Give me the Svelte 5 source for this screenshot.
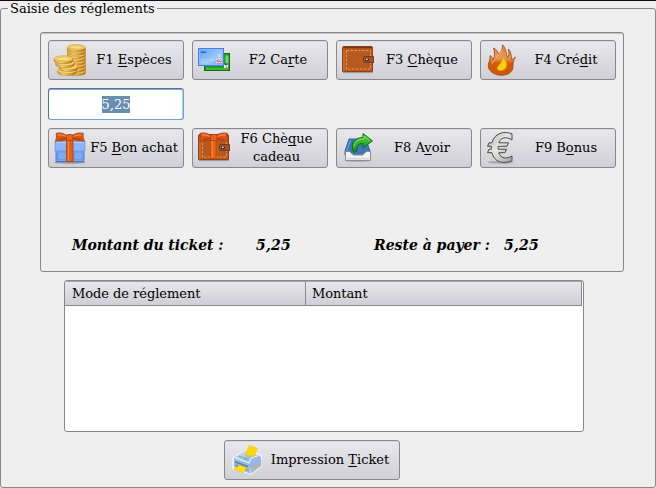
<script>
  const rowA = [
    { icon: 'coins', label: ['F1 ', 'E', 'spèces'] },
    { icon: 'cards', label: ['F2 Ca', 'r', 'te'] },
    { icon: 'wallet', label: ['F3 ', 'C', 'hèque'] },
    { icon: 'flame', label: ['F4 Cré', 'd', 'it'] }
  ];
  const rowB = [
    { icon: 'gift', label: ['F5 ', 'B', 'on achat'] },
    { icon: 'giftwallet', label: ['F6 Chè', 'q', 'ue'], second: 'cadeau' },
    { icon: 'outbox', label: ['F8 A', 'v', 'oir'] },
    { icon: 'euro', label: ['F9 B', 'o', 'nus'] }
  ];
  // base y of each coin in the two stacks
  const tall = [27, 23.6, 20.2, 16.8, 13.4, 10, 6.6, 3.4];
  const small = [[13, 26.5], [14.5, 22.5], [11, 18.7], [9.5, 14.8]];
</script>

{#snippet bow()}
  <path d="M15 5.500C11 1 5 .2 2 1.500 3 4 2.500 6 1.500 9c5 0 10 0 14-2.500zM16 5.500C20 1 26 .2 29.500 1.500 28.500 4 29 6 30.500 9c-5 0-10 0-14-2.500z" fill="#dc5614" stroke="#a93c0c" stroke-width=".8" />
  <path d="M4 3c4-.5 7 .5 9.500 2.500M27.500 3c-4-.5-7 .5-9.500 2.500" stroke="#f58a4c" stroke-width="1.300" fill="none" />
  <path d="M5 7.500l7-1.500M26.500 7.500l-7-1.500" stroke="#a03a10" stroke-width="1" />
  <rect x="12.500" y="2.500" width="6.500" height="6" rx="1.500" fill="#e8641c" stroke="#a93c0c" stroke-width=".8" />
{/snippet}

{#snippet purse()}
  <path d="M1 28.500h30" stroke="#6b625c" stroke-opacity=".5" stroke-width="1.200" />
  <path d="M.5 3.500Q.5 2.500 2 2.500h27q1.500 0 1.500 1V27.500H.5z" fill="#b8591d" stroke="#8f4316" />
  <path d="M1.500 3.500h28.500" stroke="#7c3208" stroke-width="1.300" />
  <path d="M2 6v20.500" stroke="#d07a3c" />
  <path d="M4.500 6.500h24v18.500h-24z" fill="none" stroke="#e39a5e" stroke-width="1" stroke-dasharray="2.500 1.400" />
  <path d="M22 12.500h9.500v6H22q-1-3 0-6z" fill="#a8501b" stroke="#7c3a14" />
  <circle cx="25" cy="15.500" r="1.900" fill="#28343c" /><circle cx="24.800" cy="15.300" r="1" fill="#c4dce4" />
{/snippet}

{#snippet icon(name)}
  <svg class="icon" viewBox="0 0 32 32" width="32" height="32" aria-hidden="true">
    <defs>
      <linearGradient id="gold"><stop offset="0" stop-color="#d8982c" /><stop offset=".35" stop-color="#ffe288" /><stop offset=".7" stop-color="#d2912b" /><stop offset="1" stop-color="#a96a18" /></linearGradient>
      <linearGradient id="sky" x2="1" y2="1"><stop offset="0" stop-color="#5b9bf2" /><stop offset=".6" stop-color="#9dcaff" /><stop offset="1" stop-color="#5f9ef2" /></linearGradient>
      <linearGradient id="fire" x2="0" y2="1"><stop offset="0" stop-color="#e48a40" /><stop offset=".45" stop-color="#eb9450" /><stop offset=".6" stop-color="#d45b05" /><stop offset="1" stop-color="#ce5303" /></linearGradient>
      <linearGradient id="leaf" x2="0" y2="1"><stop offset="0" stop-color="#5cda45" /><stop offset="1" stop-color="#128514" /></linearGradient>
      <linearGradient id="metal" x2="1" y2="1"><stop offset="0" stop-color="#a9aba6" /><stop offset=".45" stop-color="#e6e8e2" /><stop offset="1" stop-color="#a2a49f" /></linearGradient>
      <linearGradient id="body" x2="1" y2="1"><stop offset="0" stop-color="#dcf2fc" /><stop offset="1" stop-color="#6b9bd4" /></linearGradient>
    </defs>
    {#if name === 'coins'}
      {#each tall as y}
        <path d="M13.500 {y}v1.800c0 3.600 18 3.600 18 0V{y}z" fill="url(#gold)" stroke="#a8701b" stroke-width=".5" />
        <ellipse cx="22.500" cy={y} rx="9" ry="2.800" fill="#f3cb62" stroke="#c9953c" stroke-width=".5" />
      {/each}
      <ellipse cx="22.500" cy="3.400" rx="6.500" ry="1.600" fill="#fbe08c" stroke="#dca943" stroke-width=".5" />
      {#each small as [x, y]}
        <path d="M{x - 9.3} {y}v1.900c0 4 18.600 4 18.600 0V{y}z" fill="url(#gold)" stroke="#a8701b" stroke-width=".5" />
        <ellipse cx={x} cy={y} rx="9.300" ry="3.100" fill="#f6d16c" stroke="#c9953c" stroke-width=".5" />
      {/each}
      <ellipse cx="9.500" cy="14.800" rx="6.500" ry="1.800" fill="#fbe08c" stroke="#dca943" stroke-width=".5" />
    {:else if name === 'cards'}
      <rect x="6.500" y="9.500" width="25" height="17" fill="#259b25" stroke="#07730b" />
      <path d="M8 25h22" stroke="#65d259" stroke-width="1" />
      <path d="M27.500 11.500h3v8h-3z" fill="#7ccf76" /><path d="M26 20h4v4h-4z" fill="#f8f4ee" /><path d="M26.500 19.500h3v1.700h-3z" fill="#213c8c" /><path d="M27.500 22.500h2v1.500h-2z" fill="#ed7b45" />
      <rect x=".5" y="4.500" width="25" height="17" fill="url(#sky)" stroke="#4480e6" />
      <path d="M1.500 5.500h23v15h-23z" fill="none" stroke="#8fbfff" stroke-width=".8" />
      <path d="M3 8.300h5" stroke="#245bc0" stroke-width="1.300" /><path d="M2.500 15.800h15M3 18h8" stroke="#cbe3ff" stroke-width=".7" stroke-dasharray="2 .7" />
      <path d="M20 10h3v3.500h-3z" fill="#c3d8f0" /><path d="M18.500 14.500h5.500v4.500h-5.500z" fill="#f2f5fc" /><circle cx="20.300" cy="16.800" r="1.600" fill="#e05a43" /><circle cx="22.500" cy="17" r="1.400" fill="#df4a33" /><path d="M20 16.700h3.500" stroke="#fff" stroke-width=".8" />
    {:else if name === 'wallet'}
      {@render purse()}
    {:else if name === 'flame'}
      <path d="M9 30C4 28 1.500 24 2.500 20 3 17 4.500 16 4 11.500c1.500.8 2.500 2.500 3 4.500C9 13 9 8 7.500 4c3 1.500 4.500 4 5.500 6.500C15.500 7.500 16.500 4.500 16.500 .8c4 4.500 3.500 8.700 5 13.200 2-1.700 1.500-6 .8-9 2.700 3 3.200 6.800 3.200 10.500 1.300-.5 2.200-1 3.800-2.300-2 3.500-2.500 6-2.300 9 .2 4-2.500 6.800-5.500 8-4 1.500-8.500 1.500-12.500-.2z" fill="url(#fire)" stroke="#9b511e" stroke-width=".9" />
      <path d="M10 12.500c3-1 5-3.500 6.500-7M6 20c.5-2 2-3 3-5" fill="none" stroke="#f8c38b" stroke-width="1.200" opacity=".6" />
      <path d="M16.500 13.500c3 2.500 4.700 5 4.200 8-.4 3-3 5-6 5-2.500 0-4.200-1.500-3.200-3.500 2-2.500 5-5 5-9.500z" fill="#f5d313" stroke="#e99710" stroke-width=".8" />
    {:else if name === 'gift'}
      <ellipse cx="16" cy="30.500" rx="16" ry="1.200" fill="#706f72" opacity=".65" />
      <path d="M2 11.500h28V29.500H2z" fill="#78a5ef" stroke="#4c78cf" />
      <path d="M4 20h8v7.500H4zM20 20h8v7.500h-8z" fill="#7cacf3" stroke="#6996e6" stroke-width=".8" />
      <path d="M1 9h30v10H1z" fill="#8ab5f8" stroke="#6d99e8" stroke-width=".8" />
      <path d="M2 10.500h28" stroke="#b4d0fb" />
      <path d="M12.500 8H19v21.500h-6.500z" fill="#e55e13" stroke="#b23e08" stroke-width=".8" /><path d="M14.500 9v20" stroke="#f58345" stroke-width="1.300" />
      {@render bow()}
    {:else if name === 'giftwallet'}
      {@render purse()}
      <path d="M7 6.500l3-1M22 6l2.500 1" stroke="#7faae8" stroke-width="1.500" />
      <path d="M12.500 7H18v19.500h-5.500z" fill="#ee6511" stroke="#ba4609" stroke-width=".8" /><path d="M14 8v18" stroke="#ff8743" />
      {@render bow()}
    {:else if name === 'outbox'}
      <ellipse cx="16" cy="28.500" rx="13" ry="1.500" fill="#555" opacity=".35" />
      <path d="M7 7h17l4 12v4H3v-4z" fill="#3f75b8" stroke="#3a6ba8" /><path d="M8.500 8L5 19" stroke="#76a8df" />
      <path d="M3.500 19.500h4l4 3.500h9l4-3.500h4v9h-25z" fill="#f1f2f2" stroke="#8b8f94" /><path d="M5 26.700h22" stroke="#cfd1d4" stroke-width="1.500" />
      <path d="M12 20.500C8 14 11 5.500 21 5.500V1.500l9.500 7.500-9.500 6.500v-4c-5.500 0-6.500 3-6 7.500z" fill="url(#leaf)" stroke="#0b720f" /><path d="M12 15c.5-5 4-8 10-8V4l5.500 4.500" fill="none" stroke="#8df078" stroke-width=".8" />
    {:else if name === 'euro'}
      <ellipse cx="15" cy="30.300" rx="13" ry="1.500" fill="#494949" opacity=".3" />
      <path d="M26.500 2.200v6C20 4 14.500 6 13 11h10l-1.500 3.500H12.300v2.800H21l-1.500 3.400h-6c2 5.800 7.500 6.300 13 3.300v5.500C17 32.500 8 30 6 20.700H1.500l1.500-3.400h2.500v-2.800H1.500L3 11h3C8 1-18 0 26.500 2.200z" fill="none" stroke="none" />
      <path d="M26 1.800v6.200C20 4 14.500 5.500 12.800 10.800H22.500l-1.500 3.500h-8.900v2.900H20.500l-1.500 3.500h-6.200c1.800 6 7.700 6.500 13.200 3.300v4.800C17 32.500 8 30 6 20.700H1.500L3 17.200h2.300v-2.900H1.500L3 10.800h3C8 1.500 17.500-1.500 26 1.800z" fill="url(#metal)" stroke="#4b4d4b" stroke-width="1" stroke-linejoin="round" />
    {:else if name === 'printer'}
      <path d="M1 14L14 6l15 6v10L19 30 1 24z" fill="#fff" stroke="#fff" stroke-width="2" stroke-linejoin="round" opacity=".6" />
      <path d="M2 13.500L13 6.500l15 5.500-10 7z" fill="url(#body)" /><path d="M2 13.500l16 5.500v10.500L2 23z" fill="#93bbdc" />
      <path d="M17.500 19c1-4.500 6-7 10.500-7q2 3 1 10L19 29.500z" fill="#9bb5e9" /><path d="M3 17l13 4.700v1.800L3 18.800z" fill="#5b85b0" />
      <path d="M3 13.800l14 5c1-4 4.500-6.500 9-6.800" fill="none" stroke="#d7f0fa" stroke-width="1.300" />
      <path d="M7 12l8 3" stroke="#6e8ba0" stroke-width="1.300" /><path d="M8.500 12.300l5 1.900" stroke="#d8d044" stroke-width=".8" />
      <path d="M17.500 1.500l8 3-4 8.500-8.500-3z" fill="#ffd900" stroke="#f3bf10" stroke-width=".6" />
      <path d="M4 20.500l11 4v2l-11-4z" fill="#3c6a94" opacity=".6" /><path d="M2 25l5.500-3.800L15 24l-4 4.500z" fill="#ffe100" stroke="#eebf00" stroke-width=".6" />
      <circle cx="21" cy="24.500" r="1.200" fill="#edb51c" /><circle cx="24.500" cy="22" r="1.200" fill="#edb51c" />
    {/if}
  </svg>
{/snippet}

{#snippet payButton(b)}
  <button class="btn">
    {@render icon(b.icon)}
    {#if b.second}
      <span class="label two">
        <span class="line">{b.label[0]}<u>{b.label[1]}</u>{b.label[2]}</span>
        <span class="line">{b.second}</span>
      </span>
    {:else}
      <span class="label">{b.label[0]}<u>{b.label[1]}</u>{b.label[2]}</span>
    {/if}
  </button>
{/snippet}

<main>
  <fieldset class="outer">
    <legend>Saisie des réglements</legend>
    <section class="panel">
      <div class="row">{#each rowA as b}{@render payButton(b)}{/each}</div>
      <div class="row"><div class="field"><span>5,25</span></div></div>
      <div class="row">{#each rowB as b}{@render payButton(b)}{/each}</div>
      <div class="totals">
        <span class="t1">Montant du ticket :</span><span class="v1">5,25</span>
        <span class="t2">Reste à payer :</span><span class="v2">5,25</span>
      </div>
    </section>
    <section class="table">
      <div class="thead"><div class="c1">Mode de réglement</div><div class="c2">Montant</div></div>
    </section>
    <button class="btn print">
      {@render icon('printer')}
      <span class="label">Impression <u>T</u>icket</span>
    </button>
  </fieldset>
</main>

<style>
  :global(body) { margin: 0; background: #efefef; }
  main {
    box-sizing: border-box; width: 656px; height: 488px; overflow: hidden;
    border-top: 1px solid #100a10; background: #efefef;
    font: 13px/18px "DejaVu Serif", serif; color: #000;
  }
  .outer {
    box-sizing: border-box; width: 656px; height: 487px; margin: 0; padding: 0; min-width: 0;
    border: 1px solid #88888a; border-radius: 3px;
    display: flex; flex-direction: column; align-items: flex-start;
  }
  legend { margin-left: 7px; padding: 0 2px; height: 14px; line-height: 15px; white-space: nowrap; }
  .panel {
    box-sizing: border-box; width: 584px; height: 240px; margin: 17px 0 0 39px; padding: 7px;
    border: 1px solid #88888a; border-radius: 3px; box-shadow: inset 0 1px #c8c8c9;
    display: flex; flex-direction: column; gap: 8px;
  }
  .row { display: flex; gap: 8px; }
  .btn {
    box-sizing: border-box; width: 136px; height: 40px; padding: 0 2px 0 5px; margin: 0;
    display: flex; align-items: center; font: inherit; color: inherit;
    border: 1px solid #88888d; border-radius: 3px;
    background: linear-gradient(#e8e8ed, #cfcfd5); box-shadow: inset 0 1px #d9d9df;
  }
  .icon { flex: none; display: block; overflow: visible; }
  .label { flex: 1; text-align: center; line-height: 18px; white-space: nowrap; padding-left: 1px; }
  .two { padding: 0 2px 0 0; }
  .line { display: block; }
  u { text-decoration: underline; text-underline-offset: 2px; text-decoration-skip-ink: none; text-decoration-thickness: 1px; }
  .field {
    box-sizing: border-box; width: 136px; height: 32px; background: #fff;
    border: 1px solid; border-color: #4c74a0 #6fa3d8 #6fa3d8 #4c74a0; border-radius: 3px;
    box-shadow: inset 0 1px #90a9c4, inset -1px 0 #a9cdf0;
    display: flex; justify-content: center; align-items: center;
  }
  .field span { background: #678db2; color: #fff; line-height: 17px; height: 17px; }
  .totals { display: flex; margin: 60px 0 0 24px; font: italic bold 14px/18px "DejaVu Serif", serif; white-space: nowrap; }
  .t1 { width: 184px; letter-spacing: -.05px; } .v1 { width: 118px; letter-spacing: .2px; } .t2 { width: 130px; } .v2 { letter-spacing: .2px; }
  .table {
    box-sizing: border-box; width: 520px; height: 152px; margin: 8px 0 0 63px;
    border: 1px solid #88888a; border-radius: 3px; background: #fff; padding: 0 1px 0 0;
  }
  .thead { display: flex; height: 25px; box-sizing: border-box; border: 1px solid #88888d; border-left: 0; border-top-color: #a6a6a9; background: linear-gradient(#e6e6eb, #cfcfd5); line-height: 23px; }
  .c1 { box-sizing: border-box; width: 241px; padding-left: 7px; border-right: 1px solid #88888d; letter-spacing: -.04px; }
  .c2 { padding-left: 6px; letter-spacing: -.08px; }
  .print { width: 176px; margin: 8px 0 0 223px; padding: 0 4px 0 7px; }
</style>
